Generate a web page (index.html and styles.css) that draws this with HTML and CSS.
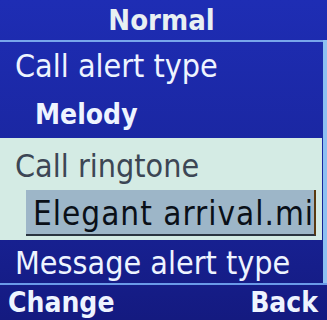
FILE: index.html
```html
<!DOCTYPE html>
<html>
<head>
<meta charset="utf-8">
<link rel="stylesheet" href="styles.css">
</head>
<body>
<div class="screen">
  <header class="title">Normal</header>
  <div class="body">
    <div class="list">
      <div class="row label">Call alert type</div>
      <div class="row value">Melody</div>
      <div class="focus">
        <div class="row label dim">Call ringtone</div>
        <div class="field"><span class="field-text">Elegant arrival.mid</span></div>
      </div>
      <div class="row label last">Message alert type</div>
    </div>
    <div class="scrollbar"></div>
  </div>
  <footer class="softkeys">
    <span class="key">Change</span>
    <span class="key">Back</span>
  </footer>
</div>
</body>
</html>
```
FILE: styles.css
```css
html, body {
  margin: 0;
  padding: 0;
  background: #141a80;
}
.screen {
  width: 327px;
  height: 320px;
  overflow: hidden;
  display: flex;
  flex-direction: column;
  font-family: "DejaVu Sans Condensed", "DejaVu Sans", sans-serif;
  color: #eef4ff;
  background: linear-gradient(#1e2db4 0%, #1a26a0 50%, #141a80 100%);
}
.title {
  height: 40px;
  line-height: 40px;
  text-align: center;
  font-weight: bold;
  font-size: 29px;
  color: #e8f0f2;
  border-bottom: 2px solid #78a6ec;
  margin-right: 4px;
  flex: none;
}
.body {
  flex: none;
  height: 241px;
  display: flex;
}
.list {
  flex: 1;
  min-width: 0;
  display: flex;
  flex-direction: column;
}
.scrollbar {
  flex: none;
  width: 4px;
  margin-left: 1px;
  margin-top: -2px;
  background: #8cc0f2;
}
.row {
  padding-left: 15px;
  font-size: 32px;
  white-space: nowrap;
}
.label {
  height: 50px;
  line-height: 48px;
}
.value {
  height: 46px;
  line-height: 46px;
  padding-left: 35px;
  font-weight: bold;
  font-size: 28px;
}
.focus {
  background: #d4ebe4;
  height: 102px;
  display: flex;
  flex-direction: column;
  min-width: 0;
}
.dim {
  color: #3c4654;
  height: 52px;
  line-height: 56px;
}
.field {
  min-width: 0;
  margin-left: 26px;
  margin-right: 6px;
  height: 44px;
  background: #9db6c8;
  border-bottom: 2px solid #2a3440;
  border-right: 2px solid #5a3a10;
  overflow: hidden;
  white-space: nowrap;
  color: #0a1018;
  font-size: 33px;
  letter-spacing: 1px;
  line-height: 48px;
  padding-left: 7px;
}
.last {
  height: 43px;
  line-height: 46px;
}
.softkeys {
  flex: none;
  border-top: 2px solid #6a9ae8;
  height: 37px;
  display: flex;
  justify-content: space-between;
  padding: 0 9px 0 8px;
  font-weight: bold;
  font-size: 28px;
  line-height: 36px;
}
```
